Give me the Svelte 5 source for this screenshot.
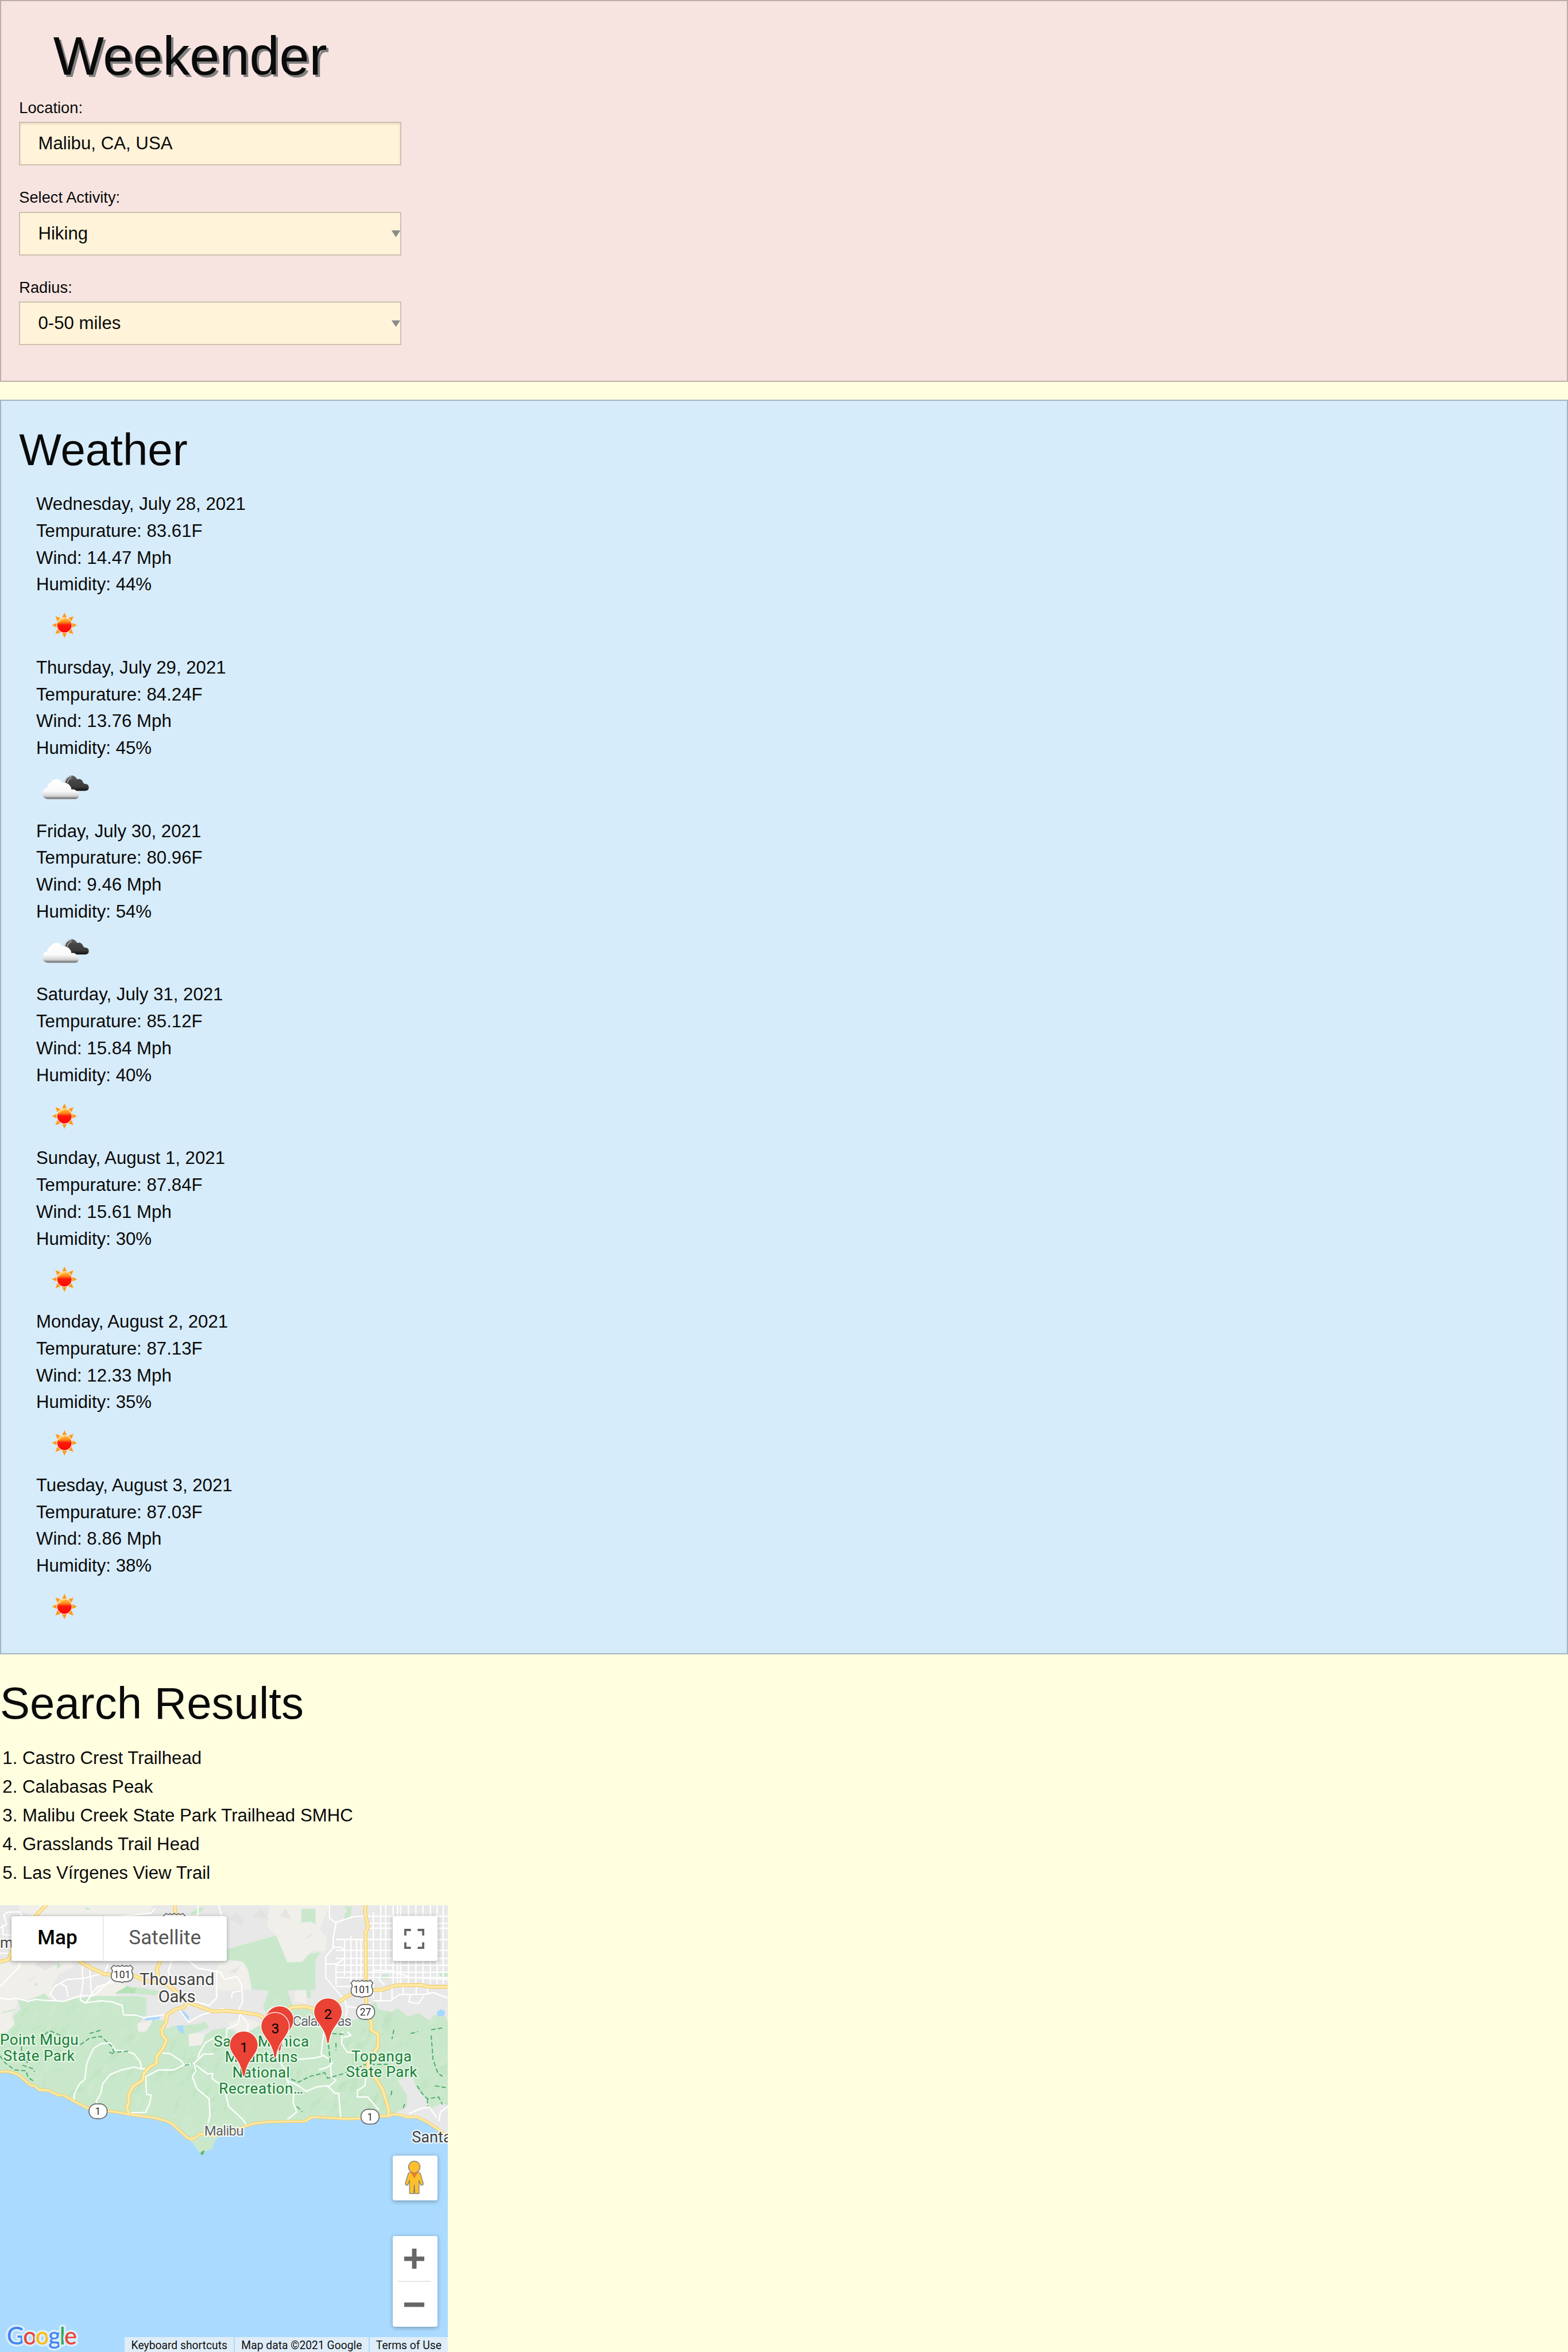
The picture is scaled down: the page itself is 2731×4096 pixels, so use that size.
<script>
  const days = [
    ['Wednesday, July 28, 2021', '83.61', '14.47', '44', 'sun'],
    ['Thursday, July 29, 2021', '84.24', '13.76', '45', 'cloud'],
    ['Friday, July 30, 2021', '80.96', '9.46', '54', 'cloud'],
    ['Saturday, July 31, 2021', '85.12', '15.84', '40', 'sun'],
    ['Sunday, August 1, 2021', '87.84', '15.61', '30', 'sun'],
    ['Monday, August 2, 2021', '87.13', '12.33', '35', 'sun'],
    ['Tuesday, August 3, 2021', '87.03', '8.86', '38', 'sun'],
  ];
  const trails = [
    'Castro Crest Trailhead',
    'Calabasas Peak',
    'Malibu Creek State Park Trailhead SMHC',
    'Grasslands Trail Head',
    'Las Vírgenes View Trail',
  ];
  const pins = [
    [1490, 622, ''],
    [1498, 619, ''],
    [1757, 577, '2'],
    [1474, 654, '3'],
    [1306, 754, '1'],
  ];

  // Relief facets, from a small seeded generator so that they are stable.
  let seed = 17;
  const rnd = () => (seed = (seed * 16807) % 2147483647) / 2147483647;
  const facets = Array.from({ length: 200 }, (_, i) => {
    const x = rnd() * 2400;
    const y = 500 + rnd() * 650;
    const w = 15 + rnd() * 45;
    const h = 20 + rnd() * 70;
    const p = [[x, y], [x + w, y - h / 3], [x + w * 0.6, y + h * 0.4], [x - w * 0.4, y + h]];
    return { d: p.map((q) => q.map((n) => n.toFixed(0)).join(',')).join(' '), dark: i % 2 };
  });

  const coast =
    'M-10,895 L40,893 70,900 100,912 165,968 185,970 210,992 260,995 310,1020 340,1020 395,1052 470,1090 520,1100 620,1110 700,1125 820,1140 890,1158 920,1172 950,1200 1003,1248 Q1025,1262 1048,1248 L1068,1230 Q1090,1224 1140,1236 L1230,1230 1305,1190 1360,1172 1440,1163 1635,1160 1670,1138 1730,1140 1850,1147 1930,1145 2040,1133 2080,1132 2110,1122 2150,1128 2180,1138 2235,1138 2290,1165 2340,1198 2410,1250';
  const green1 =
    'M95,505 140,515 240,475 270,510 340,515 430,500 505,490 735,490 785,500 785,590 770,605 735,640 740,680 780,685 820,620 890,620 890,665 930,650 1060,640 1100,625 1120,660 1070,680 1010,695 1012,758 1080,752 1100,700 1140,670 1210,660 1300,700 1400,640 1430,560 1480,545 1560,562 1650,555 1720,590 1850,600 1900,620 1980,560 2010,510 2025,560 2100,575 2130,555 2190,600 2240,580 2300,620 2330,590 2390,600 2405,650 2405,1080 2370,1060 2300,1100 2290,1050 2230,980 2210,920 2130,940 2180,1020 2180,1080 2130,1110 2080,1132 1930,1145 1730,1140 1670,1138 1635,1160 1440,1163 1305,1185 1170,1240 1165,1245 1138,1300 1090,1330 1075,1335 1030,1260 950,1200 890,1158 700,1125 470,1090 340,1020 210,992 165,968 100,912 40,893 -5,893 -5,690 40,680 80,640 70,600 110,560Z';
  const green2 =
    'M1210,240 1480,165 1540,310 1620,305 1660,262 1715,255 1690,300 1690,455 1665,455 1665,500 1645,500 1640,455 1540,460 1575,560 1430,600 1410,545 1440,460 1350,455 1330,350 1300,305 1200,290Z';

  const highways = [
    'M255,-5 L205,45 170,90 70,230 45,295 0,305',
    'M420,300 L490,340 560,372 600,375 720,380 780,410 830,412 900,430 960,480 1010,525 1140,572 1200,568 1290,575 1385,590 1440,620 1500,600 1560,550 1630,545 1690,560 1780,545 1860,490 1920,460 2050,455 2120,432 2260,430 2290,440 2410,440',
    'M935,-5 L940,60 915,130 860,300 840,345 850,400',
    'M1000,530 L985,550 940,560 895,590 890,630 865,670 870,700 892,725 870,775 840,810 838,850 800,870 770,905 765,940 710,975 690,1020 690,1060 680,1080 690,1125',
    'M1760,-5 L1760,0 M1960,-5 L1955,40 1972,120 1958,150 1960,370 1962,520 1960,580 1990,630 1988,670 2025,695 2025,760 1970,850 1970,890 2020,940 2050,990 2080,1090 2082,1130',
  ];

  const streets = [
    'M0,125 L35,105 20,55 40,40 105,38 120,65 M15,105 L15,160 110,165 M0,260 H60 M105,310 V330 L0,440',
    'M0,500 L50,507 90,502 150,518 190,507 230,512 290,515 340,518 430,488 H500 L620,380',
    'M300,515 L270,480 290,440 360,400 450,395 560,365 580,320 M320,420 L355,440 365,495 M440,330 L445,420 430,510 460,528 520,440 610,412 M480,330 L490,480 460,525 540,515 600,520 655,540 662,590 730,592 770,605 880,590',
    'M620,80 L660,60 810,45 830,20 M920,300 L900,360 920,390 M1010,300 L1060,340 1180,360 1200,395 M1160,350 L1160,500 1120,540 1050,520 960,560 1010,630 1080,590 1200,555 M1060,0 V60 L960,60 M1170,0 L1200,100',
    'M395,1045 L400,1010 425,960 455,935 465,850 500,770 540,745 590,740 620,780 680,785 720,800 750,840 760,880 720,870 650,885 590,910 550,960 540,1010 515,1055 525,1070 M760,880 L780,880',
    'M870,795 L910,797 975,840 985,858 1040,850 1090,800 1145,800 M985,858 L930,885 850,885 780,920 785,1010 M780,1015 L810,1020 800,1070 780,1112 700,1115',
    'M1040,850 L1050,890 1030,920 1055,985 1120,1040 1125,1130 1115,1170 M1050,860 L1110,905 1140,905 1135,930 1200,980 1225,1080 1300,1150 1320,1180 M1060,820 L1070,790 1100,740 1150,710',
    'M1200,400 L1270,385 1295,430 1300,520 1275,570 1330,640 1325,680 M1240,500 L1245,470 1290,460 M1210,770 L1215,665 1275,640 1285,590',
    'M1765,-5 L1765,70 1800,100 1785,180 1785,230 1745,280 1745,390 1800,455 1850,520 1860,570 1835,650 M1800,95 L1890,65 1960,60 M1860,545 L1920,555',
    'M1735,680 L1720,800 1770,830 1780,850 1755,870 1710,885 M1835,680 L1830,745 1860,790 1960,800 M1590,830 L1690,820 1730,810 M1500,845 L1540,900 1535,940 1575,1000 1570,1060 1590,1110 1540,1150 M1535,940 L1600,970 1640,1000 1700,975 1755,970 1795,1010 1815,1010 1820,1080 1825,1140 M1770,850 L1775,920 1800,940 1755,980',
    'M1960,930 L1955,970 1915,995 1915,1030 1970,1030 2030,1100 M2190,1120 L2260,1090 2300,1085 2340,1140 M2400,1080 L2360,1110 2350,1160 M1860,680 L1880,700 1840,710',
    'M2000,515 L2090,515 2140,480 2280,480 2320,470 2400,500 M2200,480 L2190,520 2240,530 2270,490 M2000,350 L2100,355 2200,390 2400,400 M2040,370 L2030,400 2060,430',
  ];

  const gridV = [2040, 2066, 2106, 2130, 2146, 2188, 2228, 2266, 2306, 2342, 2374];
  const gridH = [62, 100, 126, 186, 245, 288, 324, 362, 390];
  const trailsPath =
    'M240,695 L265,675 350,710 M430,750 L480,715 540,705 600,760 610,790 690,785 M480,690 L540,672 M0,810 L30,850 80,885 140,890 150,925 180,945 M120,860 L180,880 185,895 M115,760 V790 L150,850 M585,790 L615,800 M990,860 L1030,852 M1560,935 L1600,950 1660,920 1740,900 1755,930 1840,905 1960,855 2080,855 M1780,690 L1850,695 M1760,750 L1770,850 M1800,740 V780 M2110,670 L2100,720 M2200,690 L2240,680 M2310,700 L2320,830 2345,900 2370,920 M2310,670 L2370,660 M2235,970 L2260,1010 2290,1040 2350,1030 2370,1070 M2290,1040 V1080 M2330,970 L2390,980 M2160,1090 L2170,1060 M2095,1020 L2100,990 M1590,1080 L1620,1110';

  const labels = [
    ['m', 0, 232, 62, 80, 'town'],
    ['Thousand', 747, 430, 402, 90, 'town'],
    ['Oaks', 848, 522, 200, 90, 'town'],
    ['Calabasas', 1567, 648, 316, 76, 'small'],
    ['Malibu', 1094, 1235, 212, 74, 'small'],
    ['Santa', 2206, 1273, 214, 84, 'town'],
    ['Point Mugu', 0, 752, 420, 80, 'park'],
    ['State Park', 18, 837, 382, 80, 'park'],
    ['Santa Monica', 1145, 760, 510, 80, 'park'],
    ['Mountains', 1205, 843, 390, 80, 'park'],
    ['National', 1245, 927, 308, 80, 'park'],
    ['Recreation…', 1173, 1011, 452, 80, 'park'],
    ['Topanga', 1883, 840, 322, 80, 'park'],
    ['State Park', 1853, 924, 382, 80, 'park'],
  ];
</script>

<div class="page">
  <section class="callout search">
    <h1>Weekender</h1>
    <label for="loc">Location:</label>
    <div class="field inset"><input id="loc" value="Malibu, CA, USA" /></div>
    <label for="act">Select Activity:</label>
    <div class="field">
      <select id="act"><option>Hiking</option></select><i class="arrow"></i>
    </div>
    <label for="rad">Radius:</label>
    <div class="field">
      <select id="rad"><option>0-50 miles</option></select><i class="arrow"></i>
    </div>
  </section>

  <section class="callout weather">
    <h2>Weather</h2>
    {#each days as [date, temp, wind, humidity, icon]}
      <div class="day">
        <p>{date}</p>
        <p>Tempurature: {temp}F</p>
        <p>Wind: {wind} Mph</p>
        <p>Humidity: {humidity}%</p>
        <svg class="icon" viewBox="0 1 100 100">
          {#if icon === 'sun'}
            <g fill="#f9981c" stroke="#fbc26a" stroke-width=".6">
              {#each [0, 45, 90, 135, 180, 225, 270, 315] as a}
                <path d="M50.500 26.500 L55 36 H46Z" transform="rotate({a} 50.500 49)" />
              {/each}
            </g>
            <circle cx="50.500" cy="49" r="14.200" fill="#fdf0e4" />
            <circle cx="50.500" cy="49" r="12.900" fill="url(#sunfill)" />
            <path d="M41 44 Q43 38 50 38" fill="none" stroke="#ffe45c" stroke-width="1.800" opacity=".8" />
          {:else}
            <path d="M52 51 V43 Q46 42 52 38 Q54 25 64 25 Q71 26 73 32 Q81 29 84 38 Q86 40 86 40 Q94 40 94 46.500 Q94 52 87 52.500 H60Z" fill="url(#darkcloud)" />
            <path d="M51 39 Q53 27 63 26.500" fill="none" stroke="#b9bdc0" stroke-width="2" />
            <path d="M56 38 Q57 31 63 30" fill="none" stroke="#d9dcde" stroke-width="1.200" />
            <path d="M20 67.500 Q10.500 65 11 56 Q13 48 20 47 Q20 40 26 38 Q30 31 38 31.500 Q43 32 46 38 Q56 37 60 43 Q63 46 63 50 Q69 49 72 53 Q77 55 76.500 61 Q75 67 70 67.500Z" fill="url(#whitecloud)" />
          {/if}
        </svg>
      </div>
    {/each}
  </section>

  <section class="results">
    <h2>Search Results</h2>
    <ol>
      {#each trails as t}<li>{t}</li>{/each}
    </ol>
  </section>

  <div class="map">
    <svg class="tiles" viewBox="0 3 2400 2397">
      <defs>
        <linearGradient id="sunfill" x1="0" y1="0" x2="0" y2="1">
          <stop offset="0" stop-color="#ffc04a" /><stop offset=".28" stop-color="#ff8a1c" />
          <stop offset=".48" stop-color="#fb1b08" /><stop offset="1" stop-color="#ff0505" />
        </linearGradient>
        <linearGradient id="darkcloud" x1="0" y1="0" x2="0" y2="1">
          <stop offset="0" stop-color="#6a6a6a" /><stop offset=".3" stop-color="#484848" />
          <stop offset=".75" stop-color="#3a3a3a" /><stop offset="1" stop-color="#101010" />
        </linearGradient>
        <linearGradient id="whitecloud" x1="0" y1="0" x2="0" y2="1">
          <stop offset="0" stop-color="#fff" /><stop offset=".6" stop-color="#fafafa" />
          <stop offset=".84" stop-color="#d2d2d2" /><stop offset=".96" stop-color="#777" /><stop offset="1" stop-color="#8e979d" />
        </linearGradient>
        <clipPath id="parks"><path d={green1} /><path d={green2} /></clipPath>
      </defs>
      <rect width="2400" height="2400" fill="#e8e8e8" />
      <g fill="#f0efea">
        <path d="M110,0 H820 L790,50 690,70 600,110 190,70 100,30Z" />
        <path d="M0,320 L105,305 380,302 400,330 320,370 280,430 265,500 100,510 60,600 80,640 40,700 0,700Z" />
        <path d="M510,490 520,440 620,400 680,440 610,490Z M735,640 820,615 790,670 740,685Z M1010,690 1095,690 1080,750 1010,760Z" />
        <path d="M1170,310 1300,300 1330,350 1350,455 1290,450 1200,460 1150,450Z" />
        <path d="M1445,0 H1765 L1715,130 1750,180 1740,250 1680,245 1640,270 1620,305 1540,310 1475,160 1430,115Z" />
        <path d="M1580,460 H1640 V530 L1580,520Z M1220,640 1300,600 1400,640 1390,690 1300,700Z" />
      </g>
      <g fill="#c9e8cb">
        <path d={green1} /><path d={green2} />
        <path d="M1615,22 H1690 V105 L1665,90 1615,95Z M1845,8 H1885 L1875,75 1842,78 1848,50 1860,35Z" />
        <path d="M2035,385 Q2060,360 2090,385 L2080,400 H2045Z M2350,365 H2400 V392 H2365Z M1215,240 H1240 V295 H1215Z" />
        <path d="M1020,45 1060,15 1095,15 1080,35 1025,55Z M305,312 330,325 305,345Z M185,430 195,415 203,433Z M455,12 485,22 470,30Z M10,575 80,560 70,570 15,580Z" />
        <path d="M720,440 870,465 830,485 700,475Z" />
      </g>
      <path d="M615,475 680,435 730,450 720,475Z" fill="#b5e2b5" />
      <g clip-path="url(#parks)">
        {#each facets as f}
          <polygon points={f.d} fill={f.dark ? '#b8dfba' : '#d8edd4'} opacity=".32" />
        {/each}
      </g>
      <g fill="#dfdfdd" opacity=".7">
        <path d="M1230,80 L1260,40 1310,90 1290,110Z M1350,60 L1400,20 1440,80Z M1500,60 1560,80 1530,20Z M1620,190 1680,150 1665,170Z M140,420 190,380 180,395Z M180,320 230,300 330,310 240,350Z M1230,360 1290,325 1260,370Z" />
      </g>
      <path d="{coast} L2400,1262 V2410 H-10Z" fill="#aadaff" transform="translate(0 6)" />
      <path d="M950,1200 L1003,1252 1030,1275 1075,1335 1090,1341 1098,1322 1138,1308 1140,1290 1168,1243 1300,1196 1200,1150Z" fill="#cbe8ca" />
      <path d="M1075,1328 L1090,1316 1096,1318 1088,1341 1074,1336Z" fill="#56b873" />
      <path d="M0,1258 H2400" stroke="#b4deff" stroke-width="2" />
      <g fill="#a8d8fd">
        <path d="M775,615 L790,605 860,600 850,615 825,615 822,630 815,615 780,622Z M945,650 L985,645 980,665 990,685 975,690 955,672Z" />
        <path d="M960,565 L985,570 1012,600 1008,620 985,600Z M2340,575 L2360,560 2385,570 2380,595 2345,598Z" />
      </g>
      <g fill="none" stroke="#fff" stroke-width="7" stroke-linejoin="round">
        {#each gridV as x}<path d="M{x},0 V{x > 2100 ? 425 : 350}" />{/each}
        {#each gridH as y}<path d="M{y > 170 ? 1800 : 1970},{y} H2400" />{/each}
        <path d="M1846,186 V380 M1880,170 V440 M1910,186 V400 M1934,186 V400 M1800,438 H1880 M1785,228 H1830 L1845,250 M1745,318 H1800 V430 M1800,320 L1850,285 M2000,40 V500 M2040,445 V515 M2100,450 V510 M2160,440 V480 M2230,440 V480 M2290,445 V480" />
        {#each streets as d}<path {d} />{/each}
      </g>
      <path d={trailsPath} fill="none" stroke="#4eab6d" stroke-width="6" stroke-dasharray="24 12" />
      <g fill="none" stroke-linejoin="round">
        <g stroke="#f4cd6c" stroke-width="20">
          <path d={coast} stroke-width="16" />
          {#each highways as d}<path {d} />{/each}
        </g>
        <g stroke="#ffeba5" stroke-width="12">
          <path d={coast} stroke-width="9" />
          {#each highways as d}<path {d} />{/each}
        </g>
      </g>

      <g fill="#fff" stroke="#636363" stroke-width="5">
        {#each [[592, 322], [1877, 402], [872, 44]] as [x, y]}
          <path transform="translate({x} {y})" d="M17,3 Q30,12 40,4 Q53,14 62,2 Q72,14 84,4 Q95,12 107,3 L121,18 Q108,32 118,46 Q128,84 88,90 Q72,88 62,95 Q52,88 36,90 Q-4,84 6,46 Q16,32 3,18Z" />
        {/each}
        <rect x="477" y="1067" width="97" height="79" rx="38" />
        <rect x="1934" y="1096" width="97" height="79" rx="38" />
        <rect x="1910" y="535" width="97" height="79" rx="38" />
      </g>
      <g class="shield">
        <text x="654" y="394">101</text><text x="1938" y="474">101</text>
        <text x="524" y="1125">1</text><text x="1982" y="1155">1</text><text x="1958" y="595">27</text>
      </g>

      {#each labels as [t, x, y, w, size, kind]}
        <text class="label {kind}" {x} {y} textLength={w} font-size={size}>{t}</text>
      {/each}

      {#each pins as [x, y, n]}
        <path d="M{x},{y - 77} a76,76 0 0 1 76,76 c0,52 -60,78 -69,158 q-1,10 -7,10 q-6,0 -7,-10 c-9,-80 -69,-106 -69,-158 a76,76 0 0 1 76,-76Z" fill="#ea4335" stroke="#fff" stroke-width="4" />
        <text class="num" x={x + 1} y={y + 36}>{n}</text>
      {/each}

      <text class="google" x="36" y="2356" textLength="376"><tspan fill="#4285f4">G</tspan><tspan fill="#ea4335">o</tspan><tspan fill="#fbbc04">o</tspan><tspan fill="#4285f4">g</tspan><tspan fill="#34a853">l</tspan><tspan fill="#ea4335">e</tspan></text>
    </svg>

    <div class="types"><b>Map</b><span>Satellite</span></div>
    <div class="btn full">
      <svg viewBox="0 0 18 18"><path d="M0 0v6h2V2h4V0H0zm16 0h-4v2h4v4h2V0h-2zm0 16h-4v2h6v-6h-2v4zM2 12H0v6h6v-2H2v-4z" fill="#666" /></svg>
    </div>
    <div class="btn peg">
      <svg viewBox="0 0 34 60">
        <g fill="#fdbf2d" stroke="#737373" stroke-width="1.200" stroke-linejoin="round">
          <path d="M9.500 20.500 H24.500 L27.500 22 L33 40.500 Q33.500 43 31 43.500 L28.500 43.500 L25.500 35 V58.500 H17.800 L17 43 L16.200 58.500 H8.500 V35 L5.500 43.500 L3 43.500 Q.5 43 1 40.500 L6.500 22Z" />
          <circle cx="17" cy="11" r="10.300" />
        </g>
        <path d="M10.500 20.500 H23.500 L17 31.500Z" fill="#e1802f" />
      </svg>
    </div>
    <div class="btn zoomer">
      <span><svg viewBox="0 0 36 36"><path d="M14 0h8v14h14v8H22v14h-8V22H0v-8h14z" fill="#666" /></svg></span>
      <hr />
      <span><svg viewBox="0 0 36 36"><path d="M0 14h36v8H0z" fill="#666" /></svg></span>
    </div>
    <div class="legal"><span>Keyboard shortcuts</span><span>Map data ©2021 Google</span><span>Terms of Use</span></div>
  </div>
</div>

<style>
  :global(html) { overflow: hidden; }
  :global(body) { margin: 0; background: #ffffe0; }
  .page {
    zoom: 0.97535;
    height: 4200px;
    overflow: hidden;
    font-family: 'Liberation Sans', Arial, sans-serif;
    font-size: 32px;
    color: #0a0a0a;
  }
  .page * { box-sizing: border-box; }
  h1, h2, p, ol { margin: 0; font-weight: 400; }
  .callout {
    border: 2.060px solid rgba(10, 10, 10, 0.25);
    padding: 32px 32px 0;
    margin-bottom: 32px;
  }
  .search { background: #f7e4e1; height: 681.600px; }
  .weather { background: #d7ecfa; height: 2240px; }
  h1 {
    font-size: 96px;
    line-height: 133px;
    padding-left: 61px;
    text-shadow: 4px 4px 0 #808080;
  }
  h2 { font-size: 80px; line-height: 112px; margin-bottom: 16px; }
  .weather h2 { margin-bottom: 17px; }
  label { display: block; font-size: 28px; line-height: 50.400px; }
  .field {
    position: relative;
    width: 683px;
    height: 78px;
    margin-bottom: 32px;
    border: 2.060px solid #cbc1ae;
    background: #fff3d9;
  }
  .inset { box-shadow: inset 0 2px 4px rgba(10, 10, 10, 0.12); }
  input, select {
    display: block;
    appearance: none;
    width: 100%;
    height: 100%;
    border: 0;
    padding: 0 32px;
    background: none;
    color: #0a0a0a;
    font: inherit;
  }
  .arrow {
    position: absolute;
    right: 0;
    top: 31.500px;
    width: 16px;
    height: 12px;
    background: #8a8a8a;
    clip-path: polygon(0 0, 100% 0, 50% 100%);
  }
  .day { padding-left: 30.500px; line-height: 48px; }
  .icon { display: block; width: 100px; height: 100px; }
  ol { padding-left: 40px; line-height: 51.200px; margin-bottom: 32px; }
  .map {
    position: relative;
    width: 800px;
    height: 799px;
    overflow: hidden;
    font-family: Roboto, sans-serif;
  }
  .tiles { display: block; width: 800px; height: 799px; }
  .label { paint-order: stroke; stroke: rgba(255, 255, 255, 0.75); stroke-width: 14px; stroke-linejoin: round; }
  .town { fill: #444; }
  .small { fill: #5f6368; }
  .park { fill: #188038; stroke: rgba(235, 248, 235, 0.85); }
  .shield { font-size: 54px; text-anchor: middle; fill: #333; }
  .num { font-size: 76px; text-anchor: middle; fill: #000; }
  .google {
    font: 500 128px Lato, sans-serif;
    paint-order: stroke;
    stroke: #dcedfb;
    stroke-width: 22px;
    stroke-linejoin: round;
  }
  .types {
    position: absolute;
    left: 21px;
    top: 20px;
    display: flex;
    width: 384px;
    height: 80px;
    background: #fff;
    border-radius: 4px;
    box-shadow: 0 2px 8px rgba(0, 0, 0, 0.3);
    font-size: 36px;
    line-height: 77px;
    text-align: center;
  }
  .types b { width: 163px; font-weight: 500; color: #000; box-shadow: 1px 0 2px rgba(0, 0, 0, 0.15); }
  .types span { flex: 1; color: #565656; }
  .btn {
    position: absolute;
    right: 19px;
    display: flex;
    flex-direction: column;
    align-items: center;
    justify-content: center;
    width: 80px;
    height: 80px;
    background: #fff;
    border-radius: 4px;
    box-shadow: 0 2px 8px rgba(0, 0, 0, 0.3);
  }
  .btn svg { display: block; width: 36px; height: 36px; margin-right: 2px; }
  .full { top: 20px; }
  .peg { top: 447px; }
  .btn.peg svg { width: 34px; height: 60px; margin-right: 3px; }
  .zoomer { top: 591px; height: 162px; }
  .zoomer span { flex: 1; display: flex; align-items: center; }
  hr { width: 60px; height: 2px; margin: 0 2px 0 0; border: 0; background: #e6e6e6; }
  .legal {
    position: absolute;
    right: 0;
    bottom: 0;
    display: flex;
    gap: 2px;
    height: 28px;
    font-size: 19.800px;
    line-height: 30px;
    color: #111;
  }
  .legal span { padding: 0 11.500px; background: #dfedf8; white-space: nowrap; }
</style>
